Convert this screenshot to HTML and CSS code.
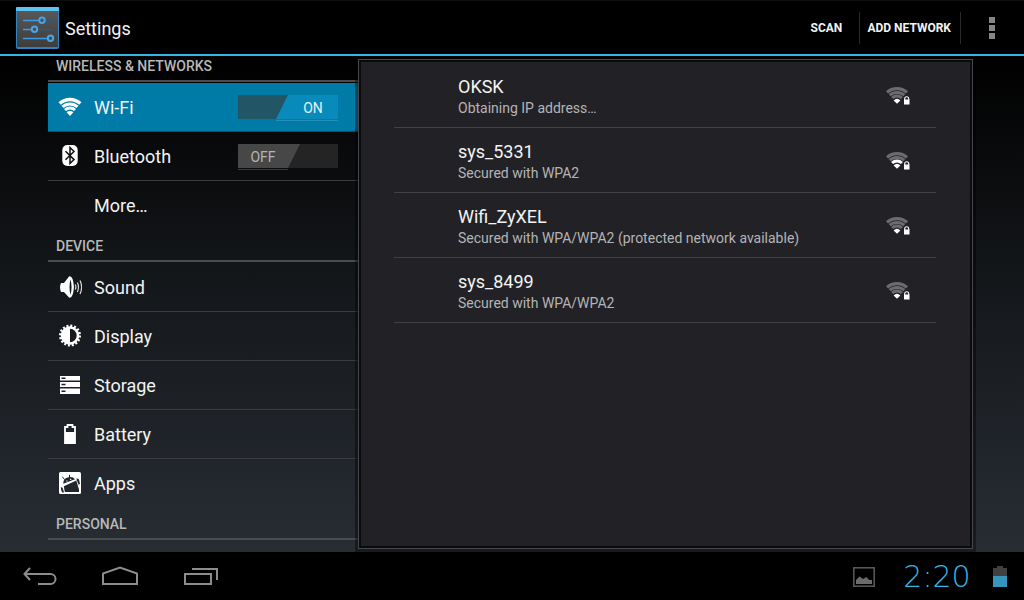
FILE: index.html
```html
<!DOCTYPE html>
<html lang="en">
<head>
<meta charset="UTF-8">
<meta name="viewport" content="width=device-width, initial-scale=1">
<title>Settings</title>
<link rel="stylesheet" href="styles.css">
</head>
<body>
  <!-- shared symbols -->
  <svg class="defs" aria-hidden="true">
    <symbol id="lock" viewBox="0 0 7 9">
      <path d="M1.7 4V2.8a2 2 0 0 1 4 0V4" fill="none" stroke="#fff" stroke-width="1.1"/>
      <rect x="1" y="3.5" width="5.5" height="5" fill="#fff"/>
    </symbol>
    <symbol id="signal" viewBox="0 0 24 19">
      <g fill="none" stroke="#6c6c70">
        <path d="M1 6.4A15 15 0 0 1 21 6.4" stroke-width="3.2"/>
        <path d="M3.7 9.2A11 11 0 0 1 18.3 9.2" stroke-width="3"/>
        <path d="M6.1 12A7.2 7.2 0 0 1 15.9 12" stroke-width="3"/>
      </g>
      <path d="M11 17.8L7.6 14.4A5 5 0 0 1 14.4 14.4Z" fill="#fff"/>
    </symbol>
    <symbol id="signal-2" viewBox="0 0 24 19">
      <g fill="none" stroke="#6c6c70">
        <path d="M1 6.4A15 15 0 0 1 21 6.4" stroke-width="3.2"/>
        <path d="M3.7 9.2A11 11 0 0 1 18.3 9.2" stroke-width="3"/>
        <path d="M6.1 12A7.2 7.2 0 0 1 15.9 12" stroke="#fff" stroke-width="3"/>
      </g>
      <path d="M11 17.8L7.6 14.4A5 5 0 0 1 14.4 14.4Z" fill="#fff"/>
    </symbol>
  </svg>

  <header class="action-bar">
    <svg class="app-icon" viewBox="0 0 43 42" aria-hidden="true">
      <defs>
        <linearGradient id="plate" x1="0" y1="0" x2="0" y2="1">
          <stop offset="0" stop-color="#5a5a5a"/>
          <stop offset="1" stop-color="#3c3c3c"/>
        </linearGradient>
      </defs>
      <rect x="0.5" y="0.5" width="42" height="41" rx="1" fill="url(#plate)" stroke="#2f86c4"/>
      <rect x="0" y="0" width="43" height="4" rx="1" fill="#5cc3f2"/>
      <path d="M1 40.8H42" stroke="#2f7fc4" stroke-width="1.5"/>
      <g fill="none" stroke-width="1.6">
        <path d="M26 13.5H37M18 22.5H37" stroke="#285a85"/>
        <path d="M7 13.5H24M7 22.5H16M7 31.5H32" stroke="#3d9be3"/>
        <g fill="#4c4c4c" stroke="#4ba3e3" stroke-width="2">
          <circle cx="26" cy="13.3" r="2.7"/>
          <circle cx="18.5" cy="22.3" r="2.7"/>
          <circle cx="34.5" cy="31.3" r="2.7"/>
        </g>
      </g>
    </svg>
    <h1>Settings</h1>
    <div class="actions">
      <button type="button" class="action">SCAN</button>
      <button type="button" class="action">ADD NETWORK</button>
      <button type="button" class="overflow" aria-label="More options"><i></i><i></i><i></i></button>
    </div>
  </header>

  <main>
    <nav class="categories">
      <h2>WIRELESS &amp; NETWORKS</h2>
      <ul>
        <li class="selected">
          <a href="#wifi">
            <svg class="icon" viewBox="0 0 24 24" aria-hidden="true">
              <g fill="none" stroke="#fff">
                <path d="M1.7 8.6A15 15 0 0 1 22.3 8.6" stroke-width="3.4"/>
                <path d="M4.5 11.9A11 11 0 0 1 19.5 11.9" stroke-width="3"/>
                <path d="M7 15A7.2 7.2 0 0 1 17 15" stroke-width="2.8"/>
              </g>
              <path d="M12 21L8.6 17.3A4.8 4.8 0 0 1 15.4 17.3Z" fill="#fff"/>
            </svg>
            Wi-Fi
          </a>
          <label class="switch">
            <input type="checkbox" role="switch" aria-label="Wi-Fi" checked>
            <span class="thumb">ON</span>
          </label>
        </li>
        <li>
          <a href="#bluetooth">
            <svg class="icon" viewBox="0 0 24 24" aria-hidden="true">
              <rect x="4.3" y="1" width="15.4" height="21" rx="5" fill="#fff"/>
              <path d="M7.5 7.3L16 15.6L12 19.5V3.5L16 7.5L7.5 15.8" fill="none" stroke="#111" stroke-width="1.5"/>
            </svg>
            Bluetooth
          </a>
          <label class="switch">
            <input type="checkbox" role="switch" aria-label="Bluetooth">
            <span class="thumb">OFF</span>
          </label>
        </li>
        <li><a href="#more"><span class="icon"></span>More…</a></li>
      </ul>

      <h2>DEVICE</h2>
      <ul>
        <li>
          <a href="#sound">
            <svg class="icon" viewBox="0 0 24 24" aria-hidden="true">
              <path d="M3 8H6L11 1.5Q15 0 16 12Q15 24 11 22.5L6 17H3Q1 12 3 8Z" fill="#fff"/>
              <path d="M12.5 4.5Q10.5 12 12.5 20Q14.6 12 12.5 4.5Z" fill="#14171a"/>
              <path d="M17.3 9.5Q18.5 12 17.3 14.5M19.3 7.5Q21.7 12 19.3 17M22 5.5Q25.2 12 22 19" fill="none" stroke="#ddd" stroke-width="1.2"/>
            </svg>
            Sound
          </a>
        </li>
        <li>
          <a href="#display">
            <svg class="icon" viewBox="0 0 24 24" aria-hidden="true">
              <circle cx="12" cy="11.5" r="9.8" fill="none" stroke="#fff" stroke-width="2.4" stroke-dasharray="2 1.848"/>
              <circle cx="12" cy="11.5" r="8" fill="none" stroke="#fff" stroke-width="2.6"/>
              <path d="M12 3.5A8 8 0 0 0 12 19.5Z" fill="#fff"/>
            </svg>
            Display
          </a>
        </li>
        <li>
          <a href="#storage">
            <svg class="icon" viewBox="0 0 24 24" aria-hidden="true">
              <path d="M2 3H22V7.5H2ZM2 9H22V14H2ZM2 15.5H22V21H2Z" fill="#fff"/>
              <path d="M3.5 5.3H7.5M3.5 11.5H7.5M3.5 18.3H7.5" stroke="#1c2024" stroke-width="1.4"/>
            </svg>
            Storage
          </a>
        </li>
        <li>
          <a href="#battery">
            <svg class="icon" viewBox="0 0 24 24" aria-hidden="true">
              <path d="M7 21V5H9.5V3H14.5V5H17V21Z" fill="none" stroke="#fff" stroke-width="1.8"/>
              <path d="M7 10H17V21H7Z" fill="#fff"/>
            </svg>
            Battery
          </a>
        </li>
        <li>
          <a href="#apps">
            <svg class="icon" viewBox="0 0 24 24" aria-hidden="true">
              <rect x="1" y="1" width="22" height="22" rx="1.5" fill="#fff"/>
              <g fill="#22272b">
                <path d="M5.2 12.8Q5.2 7 10.5 6.2Q15 5.5 17 8.2Z"/>
                <path d="M5.8 15.3L18.3 9.4L21 18.5V21H6.8Z"/>
                <path d="M2.8 16.5Q4.6 15.5 5 18L6 21.5H4.4Q3 20 2.8 16.5Z"/>
                <path d="M18.6 7.5Q20.8 7 21.2 9.5V15L18.8 9.3Z"/>
              </g>
              <path d="M6.5 8.5L4.3 5.7M11.5 6.5V3.8M20.3 8.5L21.5 13" stroke="#22272b"/>
              <path d="M8.3 10H9.5M12 8.3H13.2" stroke="#fff" stroke-width="1.2"/>
            </svg>
            Apps
          </a>
        </li>
      </ul>

      <h2>PERSONAL</h2>
    </nav>

    <section class="panel" aria-label="Wi-Fi networks">
      <ul class="networks">
        <li>
          <a href="#oksk">
            <div class="info">
              <h3>OKSK</h3>
              <p>Obtaining IP address…</p>
            </div>
            <div class="strength">
              <svg class="waves"><use href="#signal"/></svg>
              <svg class="lock"><use href="#lock"/></svg>
            </div>
          </a>
        </li>
        <li>
          <a href="#sys_5331">
            <div class="info">
              <h3>sys_5331</h3>
              <p>Secured with WPA2</p>
            </div>
            <div class="strength">
              <svg class="waves"><use href="#signal-2"/></svg>
              <svg class="lock"><use href="#lock"/></svg>
            </div>
          </a>
        </li>
        <li>
          <a href="#wifi_zyxel">
            <div class="info">
              <h3>Wifi_ZyXEL</h3>
              <p>Secured with WPA/WPA2 (protected network available)</p>
            </div>
            <div class="strength">
              <svg class="waves"><use href="#signal"/></svg>
              <svg class="lock"><use href="#lock"/></svg>
            </div>
          </a>
        </li>
        <li>
          <a href="#sys_8499">
            <div class="info">
              <h3>sys_8499</h3>
              <p>Secured with WPA/WPA2</p>
            </div>
            <div class="strength">
              <svg class="waves"><use href="#signal"/></svg>
              <svg class="lock"><use href="#lock"/></svg>
            </div>
          </a>
        </li>
      </ul>
    </section>
  </main>

  <footer class="system-bar">
    <div class="keys">
      <button type="button" aria-label="Back">
        <svg viewBox="0 0 36 22"><path d="M8 2L2.5 8L8 14M2.5 8H28.5A5 5 0 0 1 28.5 18H16" fill="none" stroke="#8c8c8c" stroke-width="2"/></svg>
      </button>
      <button type="button" aria-label="Home">
        <svg viewBox="0 0 36 22"><path d="M1 18V7.5L18 1.5L35 7.5V18Z" fill="none" stroke="#8c8c8c" stroke-width="2"/></svg>
      </button>
      <button type="button" aria-label="Recent apps">
        <svg viewBox="0 0 36 22"><path d="M3 8H29V18H3ZM10 3H35V14" fill="none" stroke="#8c8c8c" stroke-width="2"/></svg>
      </button>
    </div>
    <div class="status">
      <svg class="picture" viewBox="0 0 22 20" aria-hidden="true">
        <rect x="0.8" y="0.8" width="20.4" height="18.4" fill="none" stroke="#5c5c5c" stroke-width="1.5"/>
        <path d="M3 17V13L6.5 9.5L10 12L13.5 10L16 13H19V17Z" fill="#6a6c6a"/>
      </svg>
      <time datetime="02:20">2:20</time>
      <svg class="charge" viewBox="0 0 14 22" aria-hidden="true">
        <path d="M0 2H4V0H10V2H14V10H0Z" fill="#404040"/>
        <path d="M0 10H14V21H0Z" fill="#3795bd"/>
      </svg>
    </div>
  </footer>
</body>
</html>
```
FILE: styles.css
```css
* {
  box-sizing: border-box;
}
html, body {
  height: 100%;
}
body {
  margin: 0;
  display: flex;
  flex-direction: column;
  overflow: hidden;
  background: #000;
  color: #f3f3f3;
  font-family: Roboto, "Liberation Sans", sans-serif;
  font-size: 18px;
}
h1, h2, h3, p, ul {
  margin: 0;
  padding: 0;
}
ul {
  list-style: none;
}
a {
  color: inherit;
  text-decoration: none;
}
button {
  margin: 0;
  padding: 0;
  border: 0;
  background: none;
  color: inherit;
  font-family: inherit;
  cursor: pointer;
}
.defs {
  position: absolute;
  width: 0;
  height: 0;
}

/* top bar */
.action-bar {
  flex: none;
  display: flex;
  align-items: center;
  height: 56px;
  padding-left: 16px;
  border-top: 1px solid #0e0e0e;
  border-bottom: 2px solid #33b5e5;
}
.app-icon {
  width: 43px;
  height: 42px;
}
.action-bar h1 {
  margin-left: 6px;
  font-size: 18px;
  font-weight: 400;
  line-height: 24px;
  padding-top: 2px;
}
.actions {
  display: flex;
  margin-left: auto;
}
.action {
  min-width: 65px;
  height: 32px;
  padding: 0 9px 0 7px;
  border-right: 1px solid #2a2a2a;
  font-size: 12px;
  font-weight: 700;
}
.overflow {
  display: flex;
  flex-direction: column;
  justify-content: center;
  align-items: center;
  gap: 2px;
  width: 63px;
  padding-right: 1px;
}
.overflow i {
  width: 6px;
  height: 6px;
  background: #868686;
}

main {
  flex: 1;
  min-height: 0;
  display: flex;
  padding: 0 51px 0 48px;
  background: linear-gradient(#000, #14171a 45%, #282d34);
}

/* left list, scrolled a little past its top */
.categories {
  width: 310px;
  overflow: hidden;
}
.categories h2 {
  height: 33px;
  margin-bottom: 1px;
  padding-left: 8px;
  border-bottom: 2px solid #4a4c50;
  color: #b8b8b8;
  font-size: 14px;
  font-weight: 500;
  line-height: 34px;
}
.categories h2:first-child {
  margin-top: -7px;
}
.categories li {
  display: flex;
  align-items: center;
  height: 49px;
  padding: 0 20px 0 10px;
  border-bottom: 1px solid #3a3c40;
}
.categories li:last-child {
  height: 48px;
  border-bottom: 0;
}
.categories li.selected {
  background: #007aa6;
}
.categories a {
  flex: 1;
  display: flex;
  align-items: center;
  gap: 12px;
  height: 100%;
}
.icon {
  width: 24px;
  height: 24px;
}

.switch {
  position: relative;
  width: 100px;
  height: 24px;
  background: #242424;
  font-size: 14px;
}
.switch input {
  position: absolute;
  inset: 0;
  width: 100%;
  height: 100%;
  margin: 0;
  opacity: 0;
  cursor: pointer;
}
.thumb {
  display: block;
  width: 62px;
  height: 24px;
  padding-right: 12px;
  background: #474747;
  clip-path: polygon(0 0, 100% 0, 50px 100%, 0 100%);
  color: #b4b4b4;
  line-height: 26px;
  text-align: center;
}
/* thin edge under the thumb */
.switch::after {
  content: "";
  display: block;
  width: 50px;
  height: 1px;
  margin-top: 1px;
  background: #3a3a3a;
}
.selected .switch {
  background: #225566;
}
.selected .switch::after {
  width: 62px;
  margin-left: auto;
  background: #2490b8;
}
.switch input:checked + .thumb {
  margin-left: auto;
  padding: 0 0 0 12px;
  background: #088abb;
  clip-path: polygon(12px 0, 100% 0, 100% 100%, 0 100%);
  color: #e6f3f8;
}

/* network list */
.panel {
  flex: 1;
  margin: 4px 1px;
  padding: 1px 34px 0 33px;
  border: 2px solid #0b0b0d;
  outline: 1px solid #45474a;
  background: #222226;
  box-shadow: 0 0 0 4px rgba(0, 0, 0, 0.4);
}
.networks li {
  border-bottom: 1px solid #414145;
}
.networks a {
  display: flex;
  justify-content: space-between;
  align-items: center;
  height: 64px;
  padding: 0 26px 0 64px;
}
.info {
  padding-top: 4px;
}
.networks h3 {
  font-size: 18px;
  font-weight: 400;
  line-height: 22px;
}
.networks p {
  color: #b4b4b6;
  font-size: 14px;
  line-height: 20px;
}
.strength {
  position: relative;
  width: 24px;
  height: 19px;
}
.waves {
  display: block;
  width: 24px;
  height: 19px;
}
.lock {
  position: absolute;
  right: 0;
  bottom: 0;
  width: 7px;
  height: 9px;
}

/* bottom bar */
.system-bar {
  flex: none;
  display: flex;
  justify-content: space-between;
  align-items: center;
  height: 48px;
  padding: 2px 17px 0 0;
  background: #000;
}
.keys {
  display: flex;
}
.keys button {
  width: 80px;
  height: 46px;
}
.keys svg {
  width: 36px;
  height: 22px;
  vertical-align: middle;
}
.status {
  display: flex;
  align-items: center;
  gap: 16px;
}
.picture {
  width: 22px;
  height: 20px;
  margin-right: 6px;
}
.charge {
  width: 14px;
  height: 22px;
}
time {
  min-width: 80px;
  color: #33b5e5;
  font-family: "DejaVu Sans Light", "DejaVu Sans", sans-serif;
  font-size: 30px;
  font-weight: 200;
  line-height: 46px;
  text-align: center;
}
```
